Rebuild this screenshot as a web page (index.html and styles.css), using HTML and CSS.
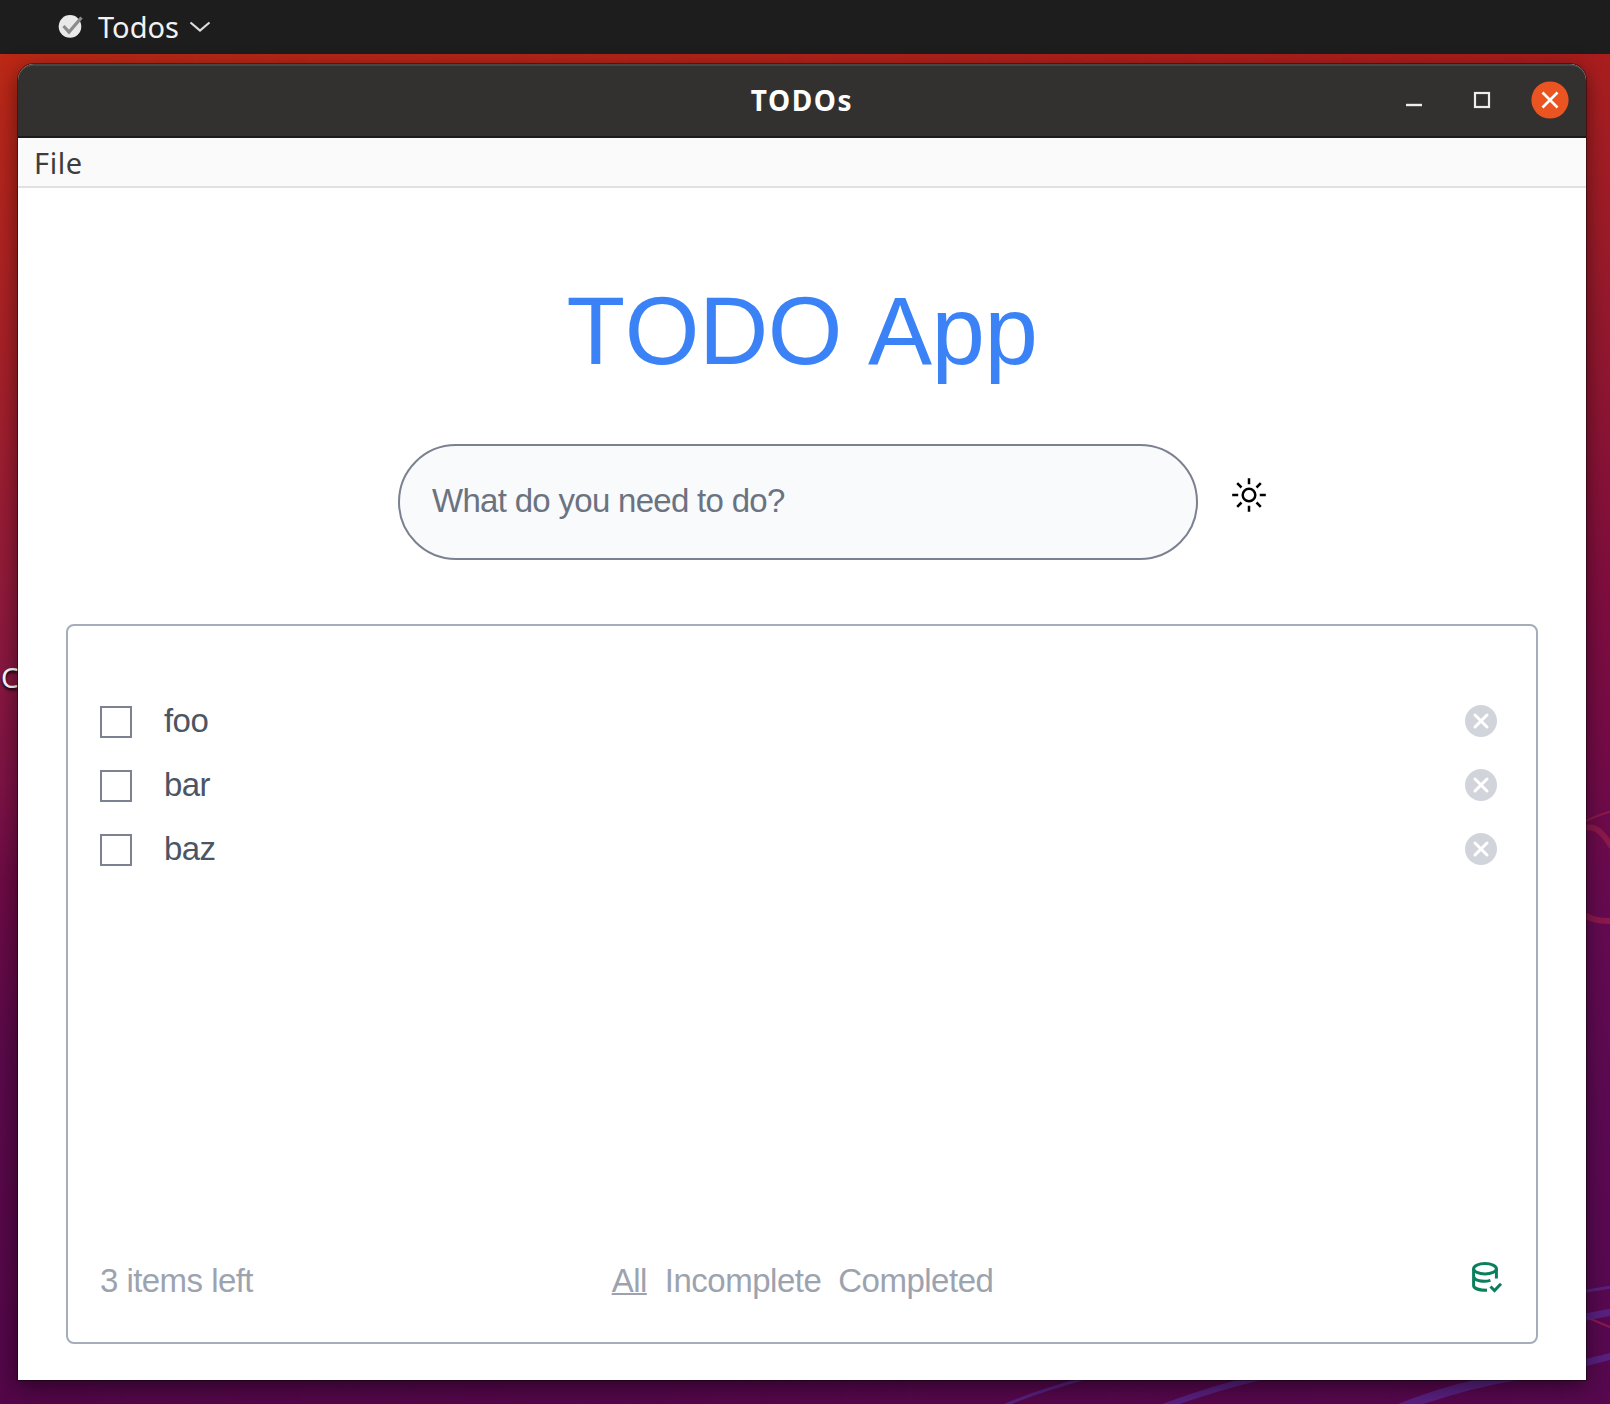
FILE: index.html
```html
<!DOCTYPE html>
<html lang="en">
<head>
<meta charset="utf-8">
<title>TODOs</title>
<link rel="stylesheet" href="styles.css">
</head>
<body>
<div class="desktop">
  <svg class="wallpaper" width="1610" height="1404" viewBox="0 0 1610 1404" aria-hidden="true">
    <defs>
      <linearGradient id="left" x1="0" y1="0" x2="0" y2="1">
        <stop offset="0" stop-color="#c02b13"/><stop offset=".1" stop-color="#b5261b"/>
        <stop offset=".25" stop-color="#a72128"/><stop offset=".43" stop-color="#8f1a3c"/>
        <stop offset=".56" stop-color="#7d1345"/><stop offset=".63" stop-color="#6d0b45"/>
        <stop offset=".75" stop-color="#5a0a49"/><stop offset="1" stop-color="#530748"/>
      </linearGradient>
      <linearGradient id="right" x1="0" y1="0" x2="0" y2="1">
        <stop offset="0" stop-color="#a91a17"/><stop offset=".06" stop-color="#a81e20"/>
        <stop offset=".2" stop-color="#981a2b"/><stop offset=".43" stop-color="#7e0d40"/>
        <stop offset=".56" stop-color="#710b49"/><stop offset=".66" stop-color="#650a52"/>
        <stop offset=".8" stop-color="#5b0a53"/><stop offset="1" stop-color="#57084f"/>
      </linearGradient>
      <linearGradient id="fade"><stop offset="0" stop-color="#fff" stop-opacity="0"/><stop offset="1" stop-color="#fff"/></linearGradient>
      <mask id="blend"><rect width="1610" height="1404" fill="url(#fade)"/></mask>
    </defs>
    <rect width="1610" height="1404" fill="url(#left)"/>
    <rect width="1610" height="1404" fill="url(#right)" mask="url(#blend)"/>
    <g fill="none" stroke="#8c194c">
      <path d="M1584 822Q1595 816 1612 811" stroke-width="2"/>
      <path d="M1580 830C1594 822 1602 832 1612 847M1580 912Q1592 922 1612 921" stroke-width="6"/>
      <path d="M1586 1317L1612 1328" stroke-width="2"/>
    </g>
    <g fill="none" stroke="#59258a" stroke-opacity=".85">
      <path d="M1580 1292L1612 1287" stroke-width="3"/>
      <path d="M1580 1318L1612 1312M1580 1364L1612 1356" stroke-width="7"/>
      <path d="M1003 1406Q1040 1390 1094 1376" stroke-width="3"/>
      <path d="M1160 1408Q1210 1389 1265 1376" stroke-width="6"/>
      <path d="M1400 1408Q1455 1386 1525 1374" stroke-width="9"/>
    </g>
  </svg>
  <span class="desktop-label">C</span>

  <header class="topbar">
    <svg width="26" height="26" viewBox="0 0 26 26" aria-hidden="true">
      <circle cx="12" cy="12.4" r="11.3" fill="#e9e9e9"/>
      <path d="M5.5 12l5.5 6L23.5 3.5" fill="none" stroke="#8b8b8b" stroke-width="3.2"/>
    </svg>
    <span class="app-name">Todos</span>
    <svg class="chevron" width="22" height="12" viewBox="0 0 22 12" aria-hidden="true">
      <path d="M1.5 1.5L11 9.5L20.5 1.5" fill="none" stroke="#dcdcdc" stroke-width="2.2"/>
    </svg>
  </header>

  <main class="window">
    <div class="titlebar">
      <h1 class="window-title">TODOs</h1>
      <div class="controls">
        <svg width="16" height="18" viewBox="0 0 16 18" aria-hidden="true"><path d="M0 14h16" stroke="#ededeb" stroke-width="2.4"/></svg>
        <svg width="18" height="18" viewBox="0 0 18 18" aria-hidden="true"><rect x="2" y="2" width="14" height="14" fill="none" stroke="#ededeb" stroke-width="2.2"/></svg>
        <svg width="38" height="38" viewBox="0 0 38 38" aria-hidden="true"><circle cx="19" cy="19" r="18.6" fill="#e95420"/><path d="M11.5 11.5l15 15m0-15l-15 15" stroke="#fff" stroke-width="2.6"/></svg>
      </div>
    </div>
    <nav class="menubar"><span>File</span></nav>
    <section class="content">
      <h2 class="heading">TODO App</h2>
      <div class="entry">
        <input class="entry-input" type="text" placeholder="What do you need to do?">
        <svg class="sun" width="36" height="36" viewBox="0 0 36 36" fill="none" stroke="#000" stroke-width="2.5" aria-hidden="true">
          <circle cx="18" cy="18" r="6.3"/>
          <path d="M18 1.2v6M18 28.8v6M1.2 18h6M28.8 18h6M6.2 6.2l4.3 4.3M25.5 25.5l4.3 4.3M6.2 29.8l4.3-4.3M25.5 10.5l4.3-4.3"/>
        </svg>
      </div>
      <div class="panel">
        <ul class="todos">
          <li class="todo"><span class="box"></span><span class="label">foo</span><svg class="remove" viewBox="0 0 32 32"><circle cx="16" cy="16" r="16"/><path d="M10 10l12 12m0-12L10 22"/></svg></li>
          <li class="todo"><span class="box"></span><span class="label">bar</span><svg class="remove" viewBox="0 0 32 32"><circle cx="16" cy="16" r="16"/><path d="M10 10l12 12m0-12L10 22"/></svg></li>
          <li class="todo"><span class="box"></span><span class="label">baz</span><svg class="remove" viewBox="0 0 32 32"><circle cx="16" cy="16" r="16"/><path d="M10 10l12 12m0-12L10 22"/></svg></li>
        </ul>
        <footer class="status">
          <span class="count">3 items left</span>
          <div class="filters"><span class="active">All</span><span>Incomplete</span><span>Completed</span></div>
          <svg class="database" width="32" height="32" viewBox="0 0 32 32" fill="none" stroke="#0b7f5c" stroke-width="3" aria-hidden="true">
            <ellipse cx="13" cy="6.8" rx="11.4" ry="5.2"/>
            <path d="M1.6 6.5v17c0 3 6 4.8 13.4 4.8M24.4 6.5v10M1.6 14c0 5 10 6.4 16.8 4.4"/>
            <path d="M18.5 24.5l4 4 6.5-6.8"/>
          </svg>
        </footer>
      </div>
    </section>
  </main>
</div>
</body>
</html>
```
FILE: styles.css
```css
* { box-sizing: border-box; }
body { margin: 0; }
.desktop {
  position: relative;
  display: flex;
  flex-direction: column;
  gap: 10px;
  width: 1610px;
  height: 1404px;
  overflow: hidden;
  font-family: "Liberation Sans", Arial, sans-serif;
  font-size: 33px;
  font-kerning: none;
}
.wallpaper { position: absolute; inset: 0; }
.desktop-label {
  position: absolute;
  left: 1px;
  top: 658px;
  font: 28px/38px "Noto Sans", sans-serif;
  color: #fff;
  text-shadow: 0 2px 3px #000;
}
.topbar {
  position: relative;
  display: flex;
  align-items: center;
  flex: none;
  height: 54px;
  padding-left: 58px;
  background: #1d1d1d;
  color: #f2f2f2;
  font: 29px/50px "Noto Sans", sans-serif;
  font-kerning: auto;
}
.app-name { width: 81px; margin: 0 10px 0 14px; }
.window {
  position: relative;
  display: flex;
  flex-direction: column;
  width: 1568px;
  height: 1316px;
  margin-left: 18px;
  border-radius: 16px 16px 0 0;
  background: #fff;
  box-shadow: 0 0 0 1px rgba(0, 0, 0, .4), 0 6px 22px rgba(0, 0, 0, .5);
}
.titlebar {
  display: grid;
  grid-template-columns: 1fr auto 1fr;
  align-items: center;
  height: 74px;
  padding-right: 17px;
  padding-left: 17px;
  border-top: 2px solid #454543;
  border-bottom: 2px solid #1c1c1b;
  border-radius: 16px 16px 0 0;
  background: #33312f;
}
.window-title {
  grid-column: 2;
  margin: -3px 0 0;
  color: #fff;
  font: bold 28px/40px "Noto Sans", sans-serif;
  letter-spacing: 1.6px;
}
.controls { display: flex; align-items: center; justify-content: flex-end; gap: 40px; margin-top: -3px; }
.controls svg:first-child { margin-right: 11px; }
.menubar {
  height: 50px;
  padding-left: 16px;
  border-bottom: 2px solid #e1e1e1;
  background: #fafafa;
  color: #3d3d3d;
  font: 29px/49px "Noto Sans", sans-serif;
  letter-spacing: .6px;
}
.content { display: flex; flex-direction: column; padding: 95px 48px 0; }
.heading {
  margin: 0;
  color: #3b82f6;
  font-size: 96px;
  font-weight: 400;
  line-height: 96px;
  letter-spacing: -.5px;
  text-align: center;
}
.entry { display: flex; gap: 33px; margin: 65px 0 0 332px; }
.entry-input {
  width: 800px;
  height: 116px;
  padding: 0 32px 2px;
  border: 2px solid #7b8190;
  border-radius: 58px;
  background: #f8fafc;
  font: inherit;
  letter-spacing: -.7px;
}
.entry-input::placeholder { color: #6b7280; opacity: 1; }
.sun { margin-top: 33px; }
.panel {
  display: flex;
  flex-direction: column;
  justify-content: space-between;
  height: 720px;
  margin-top: 64px;
  padding: 63px 32px 32px;
  border: 2px solid #a5adba;
  border-radius: 8px;
  letter-spacing: -.55px;
}
.todos { margin: 0; padding: 0; list-style: none; }
.todo { display: flex; align-items: center; height: 64px; color: #4b5563; }
.box { width: 32px; height: 32px; margin: 2px 32px 0 0; border: 2px solid #7b8190; }
.label { flex: 1; }
.remove { width: 32px; height: 32px; margin-right: 7px; fill: #d1d5db; }
.remove path { stroke: #fff; stroke-width: 3; stroke-linecap: round; }
.status {
  display: grid;
  grid-template-columns: 1fr auto 1fr;
  align-items: center;
  height: 56px;
  color: #9ca3af;
}
.count, .filters { margin-top: -2px; }
.filters { display: flex; gap: 17px; margin-left: 1px; letter-spacing: -.5px; }
.active { padding-right: 1px; text-decoration: underline; text-decoration-thickness: 2px; }
.database { justify-self: end; margin-top: -8px; }
```
